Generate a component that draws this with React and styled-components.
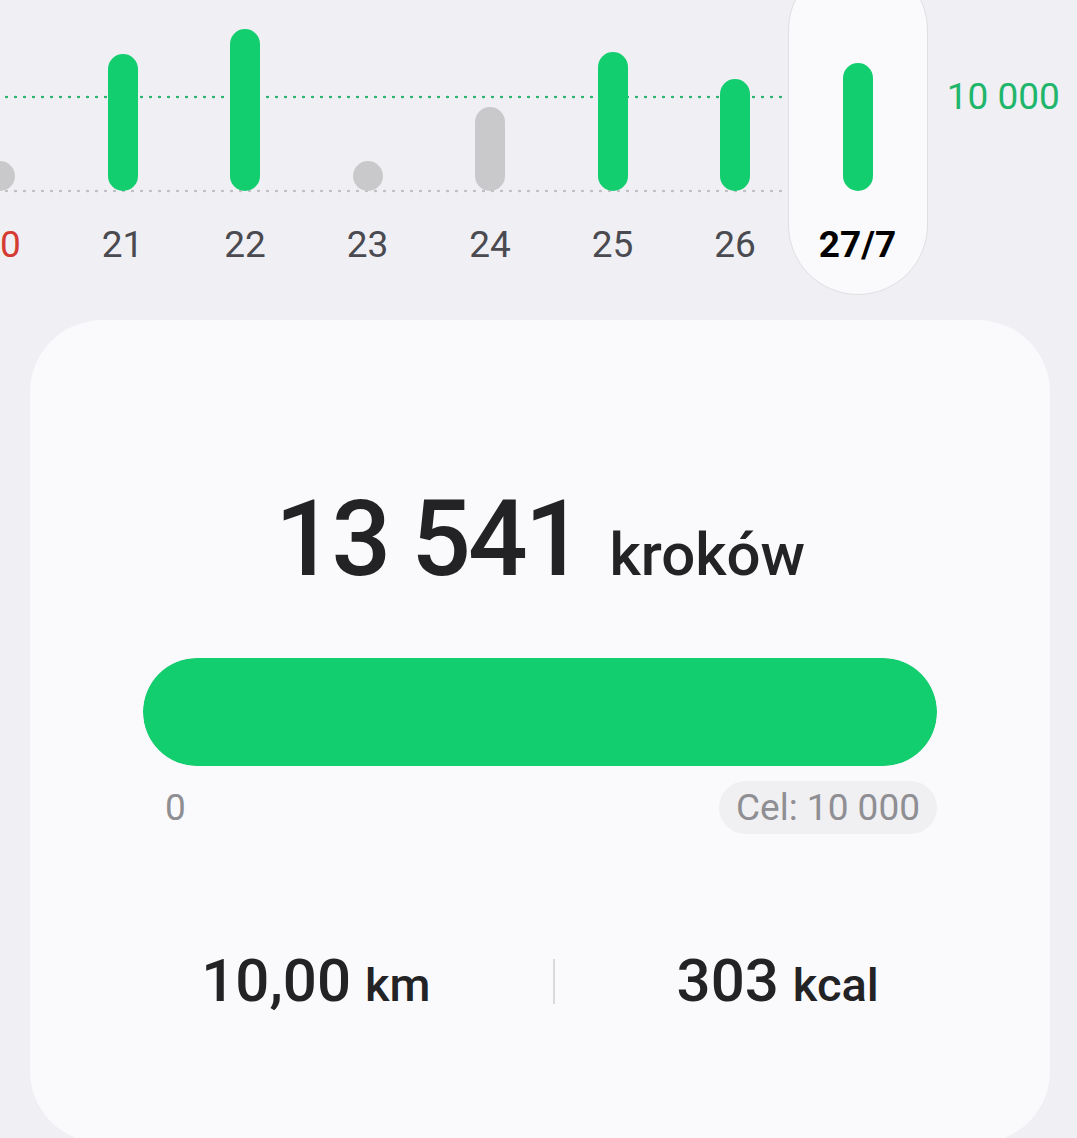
import React from "react";
import styled, { createGlobalStyle } from "styled-components";

const Global = createGlobalStyle`
  html, body {
    margin: 0;
    padding: 0;
    overflow: hidden;
    background: #efeff4;
    font-family: Roboto, "Noto Sans", "Liberation Sans", sans-serif;
  }
  * { box-sizing: border-box; }
`;

const Page = styled.div`
  width: 1077px;
  height: 1138px;
  overflow: hidden;
  background: #efeff4;
`;

const ChartRow = styled.div`
  display: flex;
  align-items: flex-start;
  margin-left: -61.25px;
`;

const Plot = styled.div`
  display: flex;
  background-image:
    radial-gradient(circle, #2db672 1.2px, transparent 1.6px),
    radial-gradient(circle, #c0c0c5 1.2px, transparent 1.6px);
  background-size: 9px 4px, 9px 4px;
  background-position: 0 95px, 0 189px;
  background-repeat: repeat-x;
`;

const DayColumn = styled.div`
  width: 122.5px;
  flex-shrink: 0;
  display: flex;
  flex-direction: column;
  align-items: center;
`;

const SelectedColumn = styled.div`
  width: 140px;
  flex-shrink: 0;
  margin: -40px -8.75px 0;
  padding: 39px 0 27px;
  border: 1px solid #dfdfe3;
  border-radius: 70px;
  background: #fafafc;
  display: flex;
  flex-direction: column;
  align-items: center;
`;

const BarArea = styled.div`
  height: 191px;
  display: flex;
  align-items: flex-end;
  justify-content: center;
`;

const Bar = styled.div`
  width: 30px;
  height: ${(p) => p.$h}px;
  border-radius: 15px;
  background: ${(p) => (p.$met ? "#13ce6f" : "#c9c9cc")};
`;

const DayLabel = styled.div`
  margin-top: 32px;
  font-size: 37px;
  line-height: 44px;
  font-weight: ${(p) => (p.$selected ? 700 : 400)};
  color: ${(p) => (p.$selected ? "#000" : p.$weekend ? "#d63b31" : "#4a4a50")};
  white-space: nowrap;
`;

const GoalLabel = styled.div`
  margin: 75px 0 0 28px;
  font-size: 37px;
  line-height: 44px;
  color: #1fb66b;
  white-space: nowrap;
`;

const Card = styled.div`
  width: 1020px;
  margin: 25px 0 0 30px;
  padding: 167px 113px 126px;
  border-radius: 72px;
  background: #fafafc;
`;

const Headline = styled.div`
  display: flex;
  justify-content: center;
  align-items: baseline;
  gap: 28px;
  color: #232326;
`;

const BigNumber = styled.span`
  font-size: 105px;
  line-height: 106px;
  font-weight: 500;
  letter-spacing: -3px;
`;

const BigUnit = styled.span`
  font-size: 60px;
  line-height: 60px;
  font-weight: 500;
`;

const Track = styled.div`
  margin-top: 65px;
  height: 108px;
  border-radius: 54px;
  background: #e6e6ea;
  overflow: hidden;
`;

const Fill = styled.div`
  height: 100%;
  border-radius: 54px;
  background: #13ce6f;
`;

const ScaleRow = styled.div`
  margin-top: 15px;
  display: flex;
  justify-content: space-between;
  align-items: center;
`;

const ScaleText = styled.span`
  padding-left: 22px;
  font-size: 37px;
  line-height: 44px;
  color: #8e8e93;
`;

const GoalChip = styled.span`
  height: 53px;
  padding: 0 17px;
  border-radius: 27px;
  background: #f0f0f2;
  display: flex;
  align-items: center;
  font-size: 37px;
  color: #8e8e93;
  white-space: nowrap;
`;

const StatsRow = styled.div`
  margin-top: 111px;
  display: flex;
  justify-content: center;
  align-items: center;
  gap: 122px;
  color: #232326;
`;

const Stat = styled.div`
  display: flex;
  align-items: baseline;
  gap: 14px;
  white-space: nowrap;
`;

const StatValue = styled.span`
  font-size: 60px;
  line-height: 72px;
  font-weight: 500;
`;

const StatUnit = styled.span`
  font-size: 47px;
  font-weight: 500;
`;

const Divider = styled.div`
  width: 2px;
  height: 45px;
  background: #dadade;
`;

const days = [
  { label: "20", h: 30, met: false, weekend: true },
  { label: "21", h: 137, met: true },
  { label: "22", h: 162, met: true },
  { label: "23", h: 30, met: false },
  { label: "24", h: 84, met: false },
  { label: "25", h: 139, met: true },
  { label: "26", h: 112, met: true },
];

const steps = 13541;
const goal = 10000;

export default function App() {
  const pct = Math.min(steps / goal, 1) * 100;
  return (
    <Page>
      <Global />
      <ChartRow>
        <Plot>
          {days.map((d) => (
            <DayColumn key={d.label}>
              <BarArea>
                <Bar $h={d.h} $met={d.met} />
              </BarArea>
              <DayLabel $weekend={d.weekend}>{d.label}</DayLabel>
            </DayColumn>
          ))}
        </Plot>
        <SelectedColumn>
          <BarArea>
            <Bar $h={128} $met />
          </BarArea>
          <DayLabel $selected>27/7</DayLabel>
        </SelectedColumn>
        <GoalLabel>10 000</GoalLabel>
      </ChartRow>

      <Card>
        <Headline>
          <BigNumber>13 541</BigNumber>
          <BigUnit>kroków</BigUnit>
        </Headline>
        <Track>
          <Fill style={{ width: `${pct}%` }} />
        </Track>
        <ScaleRow>
          <ScaleText>0</ScaleText>
          <GoalChip>Cel: 10 000</GoalChip>
        </ScaleRow>
        <StatsRow>
          <Stat>
            <StatValue>10,00</StatValue>
            <StatUnit>km</StatUnit>
          </Stat>
          <Divider />
          <Stat>
            <StatValue>303</StatValue>
            <StatUnit>kcal</StatUnit>
          </Stat>
        </StatsRow>
      </Card>
    </Page>
  );
}
